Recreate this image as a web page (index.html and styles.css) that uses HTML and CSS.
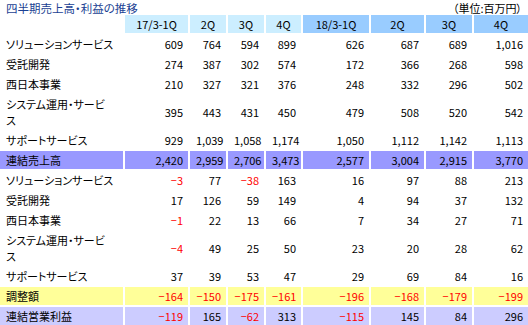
FILE: index.html
```html
<!DOCTYPE html>
<html lang="ja">
<head>
<meta charset="utf-8">
<title>四半期売上高・利益の推移</title>
<link rel="stylesheet" href="styles.css">
</head>
<body>
<div class="sheet">
  <div class="caption">
    <span class="title">四半期売上高・利益の推移</span>
    <span class="unit">（単位:百万円）</span>
  </div>
  <div class="clip">
  <table class="grid">
    <colgroup>
      <col class="w-label"><col class="w-a1"><col class="w-a2"><col class="w-a3"><col class="w-a4">
      <col class="w-b1"><col class="w-b2"><col class="w-b3"><col class="w-b4">
    </colgroup>
    <thead>
      <tr>
        <th class="blank"></th>
        <th class="ha">17/3-1Q</th><th class="ha">2Q</th><th class="ha">3Q</th><th class="ha">4Q</th>
        <th class="hb">18/3-1Q</th><th class="hb">2Q</th><th class="hb">3Q</th><th class="hb">4Q</th>
      </tr>
    </thead>
    <tbody>
      <tr><td class="lbl">ソリューションサービス</td><td>609</td><td>764</td><td>594</td><td>899</td><td>626</td><td>687</td><td>689</td><td>1,016</td></tr>
      <tr><td class="lbl">受託開発</td><td>274</td><td>387</td><td>302</td><td>574</td><td>172</td><td>366</td><td>268</td><td>598</td></tr>
      <tr><td class="lbl">西日本事業</td><td>210</td><td>327</td><td>321</td><td>376</td><td>248</td><td>332</td><td>296</td><td>502</td></tr>
      <tr class="tall"><td class="lbl">システム運用・サービ<br>ス</td><td>395</td><td>443</td><td>431</td><td>450</td><td>479</td><td>508</td><td>520</td><td>542</td></tr>
      <tr><td class="lbl">サポートサービス</td><td>929</td><td>1,039</td><td>1,058</td><td>1,174</td><td>1,050</td><td>1,112</td><td>1,142</td><td>1,113</td></tr>
      <tr class="total"><td class="lbl">連結売上高</td><td>2,420</td><td>2,959</td><td>2,706</td><td>3,473</td><td>2,577</td><td>3,004</td><td>2,915</td><td>3,770</td></tr>
      <tr><td class="lbl">ソリューションサービス</td><td class="neg">−3</td><td>77</td><td class="neg">−38</td><td>163</td><td>16</td><td>97</td><td>88</td><td>213</td></tr>
      <tr><td class="lbl">受託開発</td><td>17</td><td>126</td><td>59</td><td>149</td><td>4</td><td>94</td><td>37</td><td>132</td></tr>
      <tr><td class="lbl">西日本事業</td><td class="neg">−1</td><td>22</td><td>13</td><td>66</td><td>7</td><td>34</td><td>27</td><td>71</td></tr>
      <tr class="tall"><td class="lbl">システム運用・サービ<br>ス</td><td class="neg">−4</td><td>49</td><td>25</td><td>50</td><td>23</td><td>20</td><td>28</td><td>62</td></tr>
      <tr><td class="lbl">サポートサービス</td><td>37</td><td>39</td><td>53</td><td>47</td><td>29</td><td>69</td><td>84</td><td>16</td></tr>
      <tr class="adjust"><td class="lbl">調整額</td><td class="neg">−164</td><td class="neg">−150</td><td class="neg">−175</td><td class="neg">−161</td><td class="neg">−196</td><td class="neg">−168</td><td class="neg">−179</td><td class="neg">−199</td></tr>
      <tr class="op"><td class="lbl">連結営業利益</td><td class="neg">−119</td><td>165</td><td class="neg">−62</td><td>313</td><td class="neg">−115</td><td>145</td><td>84</td><td>296</td></tr>
    </tbody>
  </table>
  </div>
</div>
</body>
</html>
```
FILE: styles.css
```css
html, body {
  margin: 0;
  padding: 0;
  background: #ffffff;
  overflow: hidden;
}

.sheet {
  width: 528px;
  font-family: "Noto Sans CJK JP", "Noto Sans", sans-serif;
  font-size: 11px;
  font-feature-settings: "palt";
  color: #000000;
}

.caption {
  display: flex;
  justify-content: space-between;
  align-items: flex-start;
  height: 13px;
  line-height: 17px;
  padding: 0 6px 0 6px;
  position: relative;
  z-index: 1;
}

.title {
  color: #1a3f93;
  font-size: 11.5px;
}

.unit {
  color: #000000;
}

.clip {
  overflow: hidden;
  width: 528px;
}

.grid {
  table-layout: fixed;
  border-collapse: separate;
  border-spacing: 2px;
  width: 532px;
  margin: 0 -2px;
}

.w-label { width: 123px; }
.w-a1 { width: 63px; }
.w-a2 { width: 36px; }
.w-a3 { width: 36px; }
.w-a4 { width: 35px; }
.w-b1 { width: 66px; }
.w-b2 { width: 53px; }
.w-b3 { width: 46px; }
.w-b4 { width: 54px; }

.grid th,
.grid td {
  height: 18px;
  padding: 0 5px 0 6px;
  line-height: 16px;
  vertical-align: middle;
  white-space: nowrap;
}

.grid th {
  font-weight: normal;
  text-align: center;
  padding: 0;
}

.grid th.ha { background: #cceeff; }
.grid th.hb { background: #99ccff; }
.grid th.blank { background: transparent; }

.grid td {
  text-align: right;
}

.grid td.lbl {
  text-align: left;
}

.grid tr.tall td {
  height: 34px;
}

.grid td.neg {
  color: #ff0000;
}

.grid tr.total td { background: #9999ff; }
.grid tr.adjust td { background: #ffff99; }
.grid tr.op td { background: #ccccff; }
```
